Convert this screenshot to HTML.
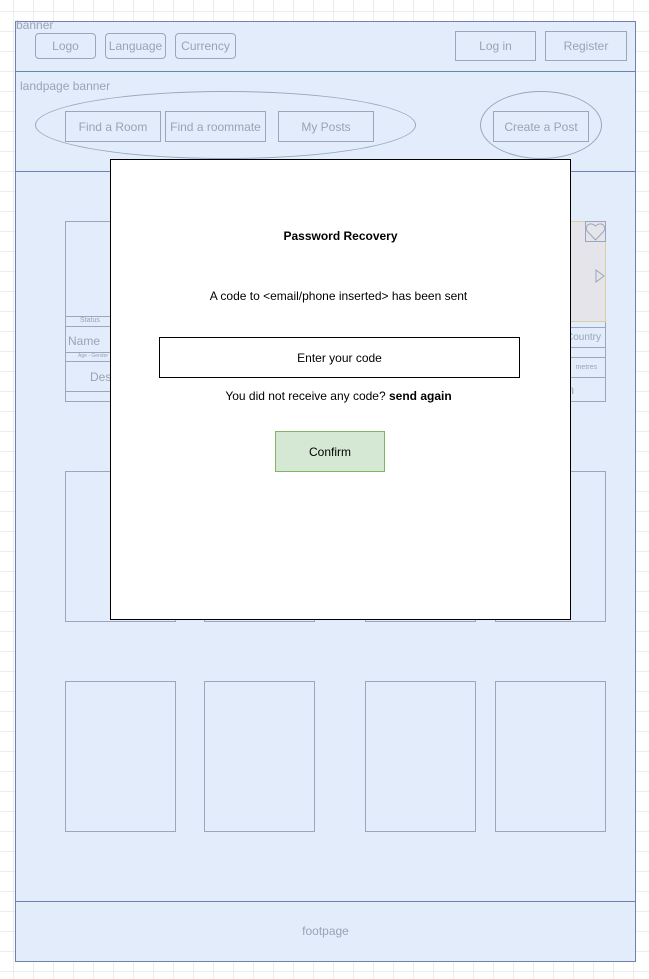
<!DOCTYPE html>
<html><head><style>
body{margin:0;width:649px;height:979px;position:relative;overflow:hidden;font-family:"Liberation Sans",sans-serif;
background-color:#fff;background-image:linear-gradient(#ececec 1px,transparent 1px),linear-gradient(90deg,#ececec 1px,transparent 1px);background-size:20px 20px;background-position:-7px 11px}
div{position:absolute;box-sizing:border-box}
.g{color:#9aa3b5;font-size:12px;display:flex;align-items:center;justify-content:center}
.b{border:1px solid #9aa6bb}
.r{border-radius:4px}
</style></head><body>
<div style="left:15px;top:21px;width:621px;height:941px;background:#e2ecfb;border:1px solid #6c84ad"></div>
<div style="left:15px;top:71px;width:621px;height:1px;background:#6c84ad"></div>
<div style="left:15px;top:171px;width:621px;height:1px;background:#6c84ad"></div>
<div style="left:15px;top:901px;width:621px;height:1px;background:#6c84ad"></div>
<div class="g" style="left:16px;top:18px;font-size:12px">banner</div>
<div class="g b r" style="left:35px;top:33px;width:61px;height:26px">Logo</div>
<div class="g b r" style="left:105px;top:33px;width:61px;height:26px">Language</div>
<div class="g b r" style="left:175px;top:33px;width:61px;height:26px">Currency</div>
<div class="g b" style="left:455px;top:31px;width:81px;height:30px">Log in</div>
<div class="g b" style="left:545px;top:31px;width:82px;height:30px">Register</div>
<div class="g" style="left:20px;top:79px">landpage banner</div>
<div style="left:35px;top:91px;width:381px;height:68px;border:1px solid #9aa6bb;border-radius:50%"></div>
<div style="left:480px;top:91px;width:122px;height:68px;border:1px solid #9aa6bb;border-radius:50%"></div>
<div class="g b" style="left:65px;top:111px;width:96px;height:31px">Find a Room</div>
<div class="g b" style="left:165px;top:111px;width:101px;height:31px">Find a roommate</div>
<div class="g b" style="left:278px;top:111px;width:96px;height:31px">My Posts</div>
<div class="g b" style="left:493px;top:111px;width:96px;height:31px">Create a Post</div>
<!-- top cards -->
<div class="b" style="left:65px;top:221px;width:111px;height:181px"></div>
<div class="b" style="left:65px;top:316px;width:111px;height:11px;font-size:7px;color:#9aa3b5;padding-left:14px">Status</div>
<div class="b" style="left:65px;top:326px;width:111px;height:27px;color:#9aa3b5;font-size:12px;padding:7px 2px">Name</div>
<div class="b" style="left:65px;top:352px;width:111px;height:10px;font-size:5px;color:#9aa3b5;padding-left:12px">Age - Gender</div>
<div class="b" style="left:65px;top:361px;width:111px;height:31px;color:#9aa3b5;font-size:12px;padding:8px 24px">Description</div>
<div class="b" style="left:495px;top:221px;width:111px;height:181px"></div>
<div style="left:495px;top:221px;width:111px;height:101px;background:#e4e4ea;border:1px solid #d8cfa3"></div>
<svg style="position:absolute;left:585px;top:221px" width="21" height="21"><rect x="0.5" y="0.5" width="20" height="20" fill="none" stroke="#9aa6bb"/><path d="M10.5 19 L2 10 C-1 5 5 0 10.5 5 C16 0 22 5 19 10 Z" fill="none" stroke="#9aa6bb"/></svg>
<svg style="position:absolute;left:595px;top:269px" width="10" height="14"><path d="M1 1 L9 7 L1 13 Z" fill="none" stroke="#9aa6bb"/></svg>
<div class="g b" style="left:495px;top:327px;width:111px;height:21px;justify-content:flex-end;padding-right:4px;font-size:10px">Country</div>
<div class="g b" style="left:495px;top:357px;width:111px;height:21px;justify-content:flex-end;padding-right:8px;font-size:7px">metres</div>
<div class="g b" style="left:495px;top:377px;width:111px;height:25px;justify-content:flex-start;padding-left:62px">ion</div>
<!-- rows -->
<div class="b" style="left:65px;top:471px;width:111px;height:151px"></div>
<div class="b" style="left:204px;top:471px;width:111px;height:151px"></div>
<div class="b" style="left:365px;top:471px;width:111px;height:151px"></div>
<div class="b" style="left:495px;top:471px;width:111px;height:151px"></div>
<div class="b" style="left:65px;top:681px;width:111px;height:151px"></div>
<div class="b" style="left:204px;top:681px;width:111px;height:151px"></div>
<div class="b" style="left:365px;top:681px;width:111px;height:151px"></div>
<div class="b" style="left:495px;top:681px;width:111px;height:151px"></div>
<div class="g" style="left:15px;top:921px;width:621px;height:20px">footpage</div>
<!-- modal -->
<div style="left:110px;top:159px;width:461px;height:461px;background:#fff;border:1px solid #000"></div>
<div style="left:110px;top:229px;width:461px;text-align:center;font-size:12px;font-weight:bold">Password Recovery</div>
<div style="left:110px;top:289px;width:457px;text-align:center;font-size:12px">A code to &lt;email/phone inserted&gt; has been sent</div>
<div style="left:159px;top:337px;width:361px;height:41px;border:1px solid #000;font-size:12px;display:flex;align-items:center;justify-content:center">Enter your code</div>
<div style="left:110px;top:389px;width:457px;text-align:center;font-size:12px">You did not receive any code? <b>send again</b></div>
<div style="left:275px;top:431px;width:110px;height:41px;background:#d5e8d4;border:1px solid #82b366;font-size:12px;display:flex;align-items:center;justify-content:center">Confirm</div>
</body></html>
